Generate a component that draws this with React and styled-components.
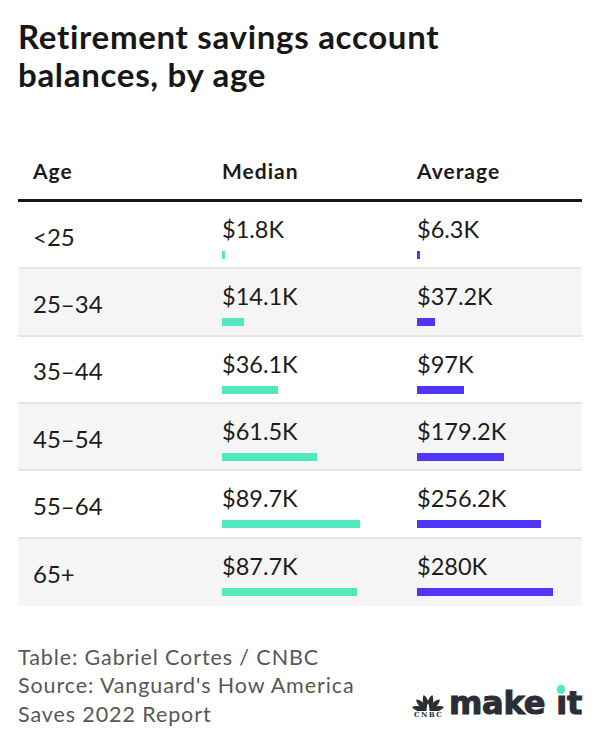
import React from 'react';
import styled, { createGlobalStyle } from 'styled-components';

const GlobalStyle = createGlobalStyle`
    body {
        margin: 0;
        background: #ffffff;
        font-family: Lato, "Open Sans", sans-serif;
        color: #1a1a1a;
    }
`;

const MINT = '#53e9bf';
const VIOLET = '#5036f6';

const rows = [
    { age: '<25', median: 1.8, average: 6.3, medianLabel: '$1.8K', averageLabel: '$6.3K' },
    { age: '25–34', median: 14.1, average: 37.2, medianLabel: '$14.1K', averageLabel: '$37.2K' },
    { age: '35–44', median: 36.1, average: 97, medianLabel: '$36.1K', averageLabel: '$97K' },
    { age: '45–54', median: 61.5, average: 179.2, medianLabel: '$61.5K', averageLabel: '$179.2K' },
    { age: '55–64', median: 89.7, average: 256.2, medianLabel: '$89.7K', averageLabel: '$256.2K' },
    { age: '65+', median: 87.7, average: 280, medianLabel: '$87.7K', averageLabel: '$280K' },
];

const Page = styled.div`
    padding: 17px 18px 0;
    width: 564px;
`;

const Title = styled.h1`
    margin: 0;
    font-size: 33px;
    line-height: 38px;
    font-weight: 700;
    letter-spacing: 0.7px;
    color: #171717;
`;

const Table = styled.div`
    margin-top: 48px;
`;

const Grid = styled.div`
    display: grid;
    grid-template-columns: 189px 195px 1fr;
    box-sizing: border-box;
`;

const HeaderRow = styled(Grid)`
    height: 61px;
    align-items: center;
    border-bottom: 3px solid #171717;
`;

const HeaderCell = styled.div`
    padding-left: 15px;
    font-size: 21px;
    font-weight: 700;
    letter-spacing: 1px;
    color: #1a1a1a;
`;

const Row = styled(Grid)`
    height: 67.33px;
    background: ${(p) => (p.$shaded ? '#f5f5f5' : '#ffffff')};
    border-bottom: ${(p) => (p.$last ? 'none' : '2px solid #e5e5e5')};
`;

const AgeCell = styled.div`
    align-self: center;
    margin-top: 3px;
    padding-left: 15px;
    font-size: 24px;
    color: #1c1c1c;
`;

const ValueCell = styled.div`
    padding: 14px 0 0 15px;
    display: flex;
    flex-direction: column;
    align-items: flex-start;
    gap: 9px;
`;

const Value = styled.span`
    font-size: 23.5px;
    line-height: 26px;
    color: #1c1c1c;
`;

const Bar = styled.div`
    height: 8px;
    background: ${(p) => p.$color};
`;

const Footer = styled.div`
    margin-top: 37px;
    display: flex;
    justify-content: space-between;
    align-items: flex-end;
`;

const Credits = styled.div`
    font-size: 21.5px;
    line-height: 28.5px;
    letter-spacing: 0.9px;
    color: #575757;
`;

const Logo = styled.div`
    display: flex;
    align-items: flex-end;
    gap: 5px;
    margin-bottom: 9px;
    color: #2b2e35;
`;

const Peacock = styled.div`
    display: flex;
    flex-direction: column;
    align-items: center;
    width: 32px;
    margin-bottom: 1px;
`;

const CnbcText = styled.span`
    font-family: "DejaVu Serif", serif;
    font-size: 7px;
    font-weight: 700;
    line-height: 6px;
    letter-spacing: 1.4px;
    margin: 1px -1.4px 0 0;
`;

const Wordmark = styled.span`
    position: relative;
    font-family: "DejaVu Sans", sans-serif;
    font-size: 32px;
    font-weight: 700;
    line-height: 32px;
    letter-spacing: -0.2px;
    -webkit-text-stroke: 1.1px currentColor;
`;

const Dot = styled.span`
    position: absolute;
    right: 17px;
    top: -2px;
    width: 8.5px;
    height: 8.5px;
    border-radius: 50%;
    background: ${MINT};
`;

const PeacockIcon = () => {
    const angles = [-76, -46, -15, 15, 46, 76];
    return (
        <svg width="32" height="17" viewBox="0 0 32 17">
            {angles.map((a) => (
                <path
                    key={a}
                    d="M16 17 C12.4 11.5 12.6 4.5 16 0.5 C19.4 4.5 19.6 11.5 16 17 Z"
                    fill="currentColor"
                    transform={`rotate(${a} 16 17)`}
                />
            ))}
            <path d="M14.5 17 C14.7 13 15.2 10.2 16 9.6 C16.8 10.2 17.3 13 17.5 17 Z" fill="#fff" />
        </svg>
    );
};

export default function App() {
    return (
        <Page>
            <GlobalStyle />
            <Title>
                Retirement savings account
                <br />
                balances, by age
            </Title>
            <Table>
                <HeaderRow>
                    <HeaderCell>Age</HeaderCell>
                    <HeaderCell>Median</HeaderCell>
                    <HeaderCell>Average</HeaderCell>
                </HeaderRow>
                {rows.map((r, i) => (
                    <Row key={r.age} $shaded={i % 2 === 1} $last={i === rows.length - 1}>
                        <AgeCell>{r.age}</AgeCell>
                        <ValueCell>
                            <Value>{r.medianLabel}</Value>
                            <Bar $color={MINT} style={{ width: `${Math.max(3, r.median * 1.54)}px` }} />
                        </ValueCell>
                        <ValueCell>
                            <Value>{r.averageLabel}</Value>
                            <Bar $color={VIOLET} style={{ width: `${Math.max(2, r.average * 0.485)}px` }} />
                        </ValueCell>
                    </Row>
                ))}
            </Table>
            <Footer>
                <Credits>
                    Table: Gabriel Cortes / CNBC
                    <br />
                    Source: Vanguard's How America
                    <br />
                    Saves 2022 Report
                </Credits>
                <Logo>
                    <Peacock>
                        <PeacockIcon />
                        <CnbcText>CNBC</CnbcText>
                    </Peacock>
                    <Wordmark>
                        make ıt
                        <Dot />
                    </Wordmark>
                </Logo>
            </Footer>
        </Page>
    );
}
